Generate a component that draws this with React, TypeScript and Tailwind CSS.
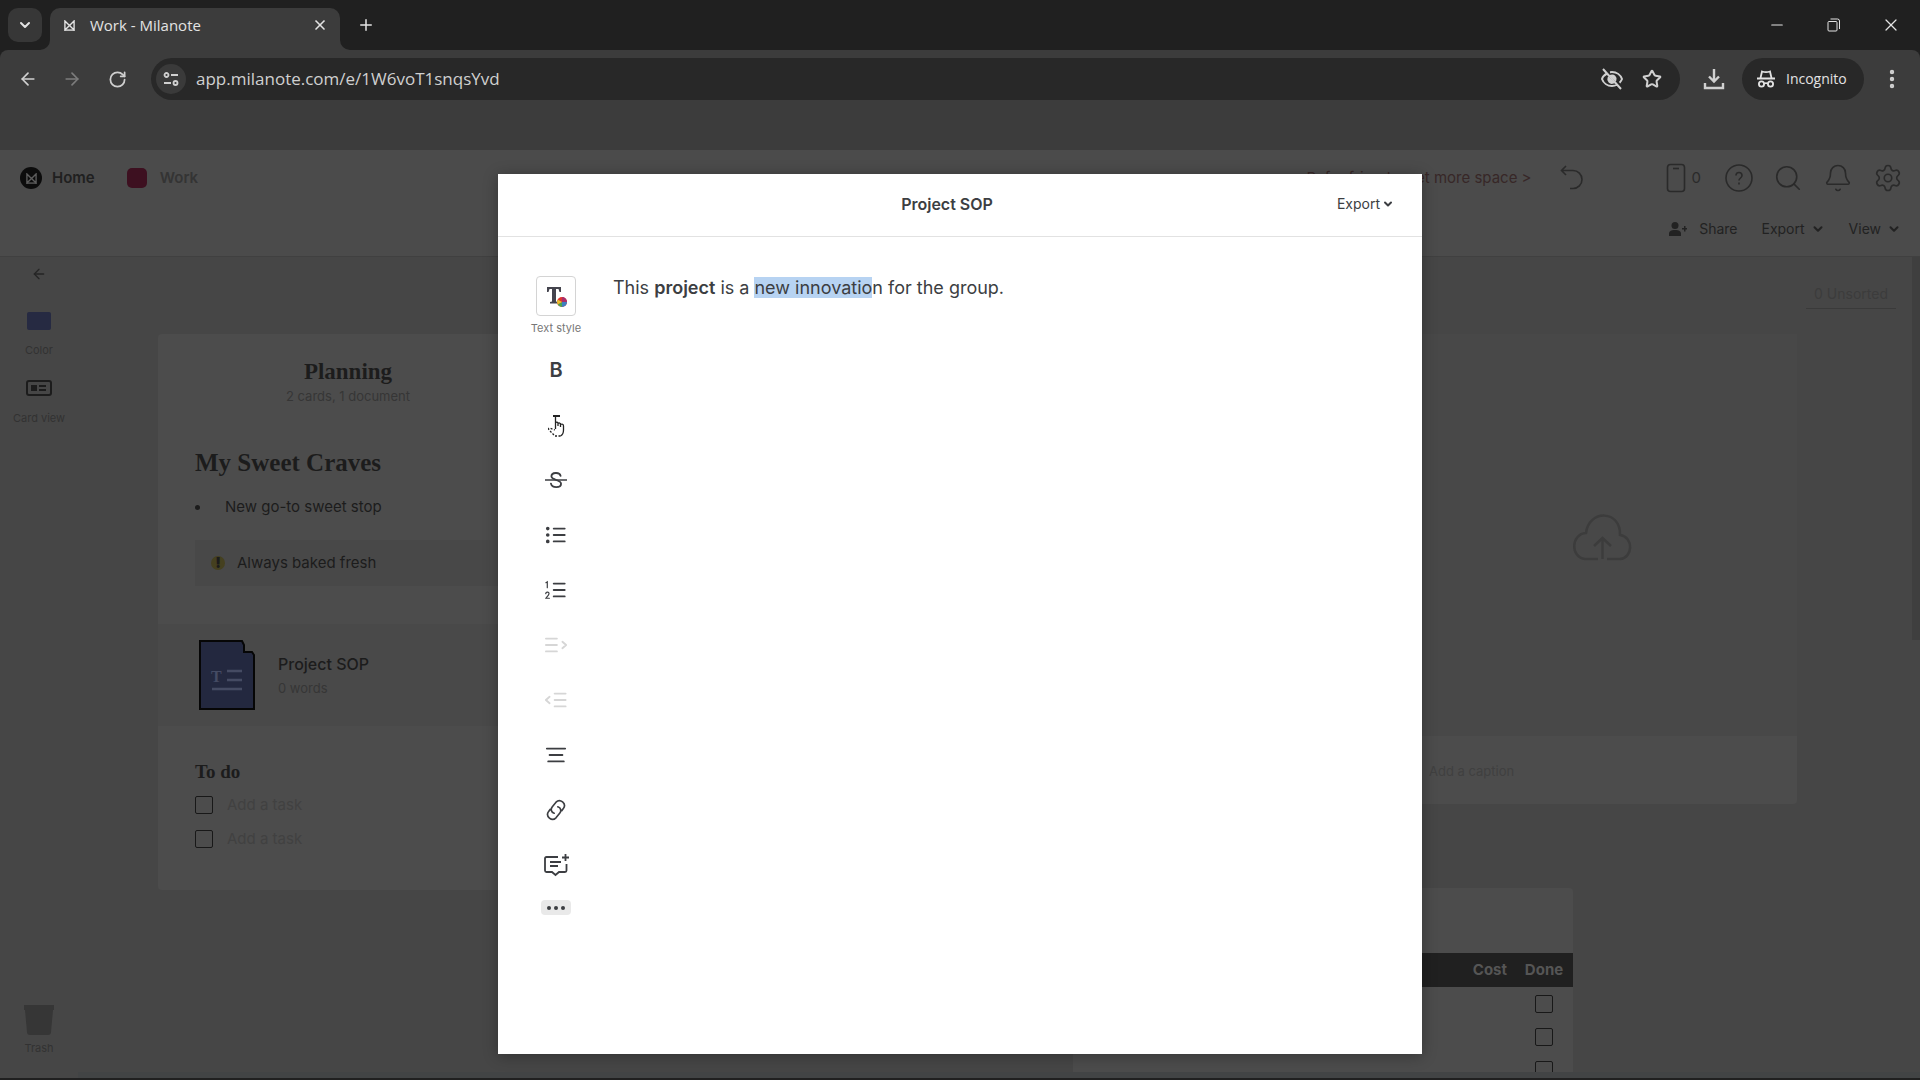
import React from "react";
import {
  ArrowLeft,
  ArrowRight,
  Bell,
  ChevronDown,
  EllipsisVertical,
  Minus,
  Plus,
  RotateCw,
  Search,
  Settings,
  Star,
  X,
} from "lucide-react";

const Logo: React.FC<{ className: string }> = ({ className }) => (
  <svg viewBox="0 0 12 12" className={className} fill="none" stroke="currentColor">
    <path d="M1 1l5 5 5-5v10L6 6l-5 5z" strokeWidth="1.5" />
    <path d="M1 11h10" strokeWidth="1.5" />
  </svg>
);

const BrowserTabs = () => (
  <div className="flex h-[50px] items-end bg-[#202020] text-[#e3e3e3]">
    <button
      aria-label="Search tabs"
      className="mb-2 ml-2 flex h-[34px] w-[34px] items-center justify-center rounded-[10px] bg-[#373737]"
    >
      <ChevronDown size={16} strokeWidth={3} />
    </button>
    <div className="relative ml-2 flex h-[42px] w-[290px] items-center rounded-t-[10px] bg-[#3c3c3c] pr-3 pl-[14px] pb-2">
      <svg viewBox="0 0 10 10" width="10" height="10" fill="#3c3c3c" className="absolute right-full bottom-0">
        <path d="M10 0v10H0A10 10 0 0 0 10 0z" />
      </svg>
      <svg viewBox="0 0 10 10" width="10" height="10" fill="#3c3c3c" className="absolute bottom-0 left-full">
        <path d="M0 0v10h10A10 10 0 0 1 0 0z" />
      </svg>
      <Logo className="h-[11px] w-[11px]" />
      <span className="ml-[15px] flex-1 text-[15px]">Work - Milanote</span>
      <button aria-label="Close tab">
        <X size={16} strokeWidth={2.5} />
      </button>
    </div>
    <button aria-label="New tab" className="mb-4 ml-[17px]">
      <Plus size={18} />
    </button>
    <div className="mr-[19px] mb-[15px] ml-auto flex w-[133px] items-center justify-between">
      <button aria-label="Minimize">
        <Minus size={18} strokeWidth={1.5} />
      </button>
      <button aria-label="Restore">
        <svg viewBox="0 0 14 14" width="14" height="14" fill="none" stroke="currentColor">
          <rect x="1" y="3.5" width="9" height="9.5" rx="1" />
          <path d="M3.5 1h7a2 2 0 0 1 2 2v8" />
        </svg>
      </button>
      <button aria-label="Close window">
        <X size={20} strokeWidth={1.5} />
      </button>
    </div>
  </div>
);

const AddressBar = () => (
  <div className="h-[100px] rounded-t-lg bg-[#3c3c3c] pt-2 text-[#d0d0d0]">
    <div className="flex h-[42px] items-center">
      <button aria-label="Back" className="ml-[18px]">
        <ArrowLeft size={20} />
      </button>
      <button aria-label="Forward" className="ml-6 text-[#7c7c7c]">
        <ArrowRight size={20} />
      </button>
      <button aria-label="Reload" className="ml-[26px]">
        <RotateCw size={19} strokeWidth={2.2} />
      </button>
      <div className="ml-6 flex h-[42px] flex-1 items-center rounded-full bg-[#282828] pr-[18px] pl-[5px]">
        <button
          aria-label="Site information"
          className="flex h-[30px] w-[30px] items-center justify-center rounded-full bg-[#3a3a3a]"
        >
          <svg viewBox="0 0 16 16" width="16" height="16" fill="none" stroke="currentColor" strokeWidth="1.8">
            <circle cx="3.5" cy="4" r="2" />
            <path d="M8 4h7M1 12h7" />
            <circle cx="12.5" cy="12" r="2" />
          </svg>
        </button>
        <input
          aria-label="Address"
          className="ml-[10px] min-w-0 flex-1 bg-transparent text-[17px] outline-none"
          defaultValue="app.milanote.com/e/1W6voT1snqsYvd"
        />
        <button aria-label="Third-party cookies blocked">
          <svg viewBox="0 0 24 24" width="24" height="24" fill="none" stroke="currentColor" strokeWidth="2">
            <path d="M7 6.500C4.500 7.800 2.600 10 2 12c1.400 4 5.400 7 10 7 1.800 0 3.500-.5 5-1.300M10 5.200c.7-.1 1.300-.2 2-.2 4.600 0 8.600 3 10 7-.5 1.300-1.300 2.600-2.400 3.700M3 2l18 20" />
            <path d="M11 8.600a3.500 3.500 0 0 1 4.400 4.400z" fill="currentColor" />
            <path d="M8.500 11a3.600 3.600 0 0 0 4.800 4.600z" fill="currentColor" />
          </svg>
        </button>
        <button aria-label="Bookmark this tab" className="ml-[18px]">
          <Star size={20} strokeWidth={2.4} />
        </button>
      </div>
      <button aria-label="Downloads" className="ml-[23px]">
        <svg viewBox="0 0 22 22" width="22" height="22" fill="none" stroke="currentColor" strokeWidth="2.4">
          <path d="M11 1v12M6 8.500l5 5 5-5M2 15v5h18v-5" />
        </svg>
      </button>
      <button className="ml-[17px] flex h-[42px] w-[122px] items-center gap-[10px] rounded-full bg-[#282828] pl-[14px] text-sm text-[#e3e3e3]">
        <svg viewBox="0 0 20 20" width="20" height="20" fill="none" stroke="currentColor" strokeWidth="1.8">
          <path d="M1 9.500h18M4.500 9l1.500-6.500c2 .7 6 .7 8 0L15.500 9" />
          <circle cx="5.500" cy="15" r="2.600" />
          <circle cx="14.500" cy="15" r="2.600" />
          <path d="M8 14.500c1.300-.6 2.700-.6 4 0" />
        </svg>
        Incognito
      </button>
      <button aria-label="Browser menu" className="mr-4 ml-4">
        <EllipsisVertical size={24} strokeWidth={2.4} />
      </button>
    </div>
  </div>
);

const AppHeader = () => (
  <header className="h-[107px] shrink-0 border-b border-[#404040] bg-[#4b4b4b] text-[#2a2a2a]">
    <div className="flex h-14 items-center pr-[17px] pl-5">
      <a href="#home" className="flex items-center gap-[10px] text-[15px] font-semibold text-[#202020]">
        <span className="flex h-[22px] w-[22px] items-center justify-center rounded-full bg-[#0c0c0c] text-[#5c5c5c]">
          <Logo className="h-[11px] w-[11px]" />
        </span>
        Home
      </a>
      <a href="#work" className="ml-8 flex items-center gap-[13px] text-[15px] font-semibold text-[#343434]">
        <span className="h-5 w-5 rounded-[5px] bg-[#3d1020]" />
        Work
      </a>
      <a href="#refer" className="ml-auto text-[15px] text-[#372727]">
        Refer friends, get more space &gt;
      </a>
      <button aria-label="Undo" className="ml-[28px]">
        <svg viewBox="0 0 24 26" width="24" height="26" fill="none" stroke="currentColor" strokeWidth="1.6">
          <path d="M6 1L1.500 5.500 6 10M1.500 5.500H13a9 9 0 0 1 0 18h-3" />
        </svg>
      </button>
      <button className="ml-[82px] flex items-center gap-[6px] text-[15px]">
        <svg viewBox="0 0 20 30" width="20" height="30" fill="none" stroke="currentColor" strokeWidth="1.6">
          <rect x="1.500" y="1.500" width="17" height="27" rx="3" />
          <path d="M7 5.500h6" />
        </svg>
        0
      </button>
      <button aria-label="Help" className="ml-6">
        <svg viewBox="0 0 28 28" width="28" height="28" fill="none" stroke="currentColor" strokeWidth="1.6">
          <circle cx="14" cy="14" r="13" />
          <path d="M11 11.500c0-4 6-4 6 0 0 2.500-3 2.500-3 5M14 18.500v2" />
        </svg>
      </button>
      <button aria-label="Search" className="ml-5">
        <Search size={30} strokeWidth={1.3} />
      </button>
      <button aria-label="Notifications" className="ml-5">
        <Bell size={30} strokeWidth={1.3} />
      </button>
      <button aria-label="Settings" className="ml-5">
        <Settings size={30} strokeWidth={1.3} />
      </button>
    </div>
    <div className="flex h-[46px] items-center justify-end pr-[19px] text-sm text-[#222222]">
      <button className="flex items-center gap-3">
        <svg viewBox="0 0 18 14" width="18" height="14" fill="currentColor">
          <circle cx="6" cy="3.500" r="3.500" />
          <path d="M0 14v-2c0-3 2-4 6-4s6 1 6 4v2zM13 6h2V4h1.500v2H18v1.500h-1.500v2H15v-2h-2z" />
        </svg>
        Share
      </button>
      <button className="ml-6 flex items-center gap-[6px]">
        Export <ChevronDown size={14} strokeWidth={3.5} />
      </button>
      <button className="ml-6 flex items-center gap-[6px]">
        View <ChevronDown size={14} strokeWidth={3.5} />
      </button>
    </div>
  </header>
);

const Sidebar = () => (
  <aside className="flex w-[78px] shrink-0 flex-col items-center pt-[9px] text-[11px] leading-4 text-[#323232]">
    <button aria-label="Back">
      <ArrowLeft size={16} className="text-[#252525]" />
    </button>
    <button className="mt-[30px] flex flex-col items-center gap-3">
      <span className="h-[18px] w-[24px] rounded-[2px] bg-[#262a42]" />
      Color
    </button>
    <button className="mt-[22px] flex flex-col items-center gap-[14px]">
      <svg viewBox="0 0 26 16" width="26" height="16" className="text-[#1c1c1c]">
        <rect x="1" y="1" width="24" height="14" rx="2" fill="none" stroke="currentColor" strokeWidth="2" />
        <path d="M5 5h6v6H5zM13 5h7v2h-7zM13 9h7v2h-7z" fill="currentColor" />
      </svg>
      Card view
    </button>
    <button className="mt-auto mb-[22px] flex flex-col items-center gap-1">
      <svg viewBox="0 0 30 32" width="30" height="32" fill="#363636">
        <path d="M0 1h30v5h-1l-2 22q0 3-3 3H6q-3 0-3-3L1 6H0z" />
      </svg>
      Trash
    </button>
  </aside>
);

const PlanningCard = () => (
  <section className="absolute top-[77px] left-[80px] w-[380px] rounded bg-[#4c4c4c] pb-[34px] text-[#1c1c1c]">
    <div className="flex flex-col items-center pt-6">
      <h2 className="font-[Liberation_Serif,serif] text-[23px] leading-7 font-bold">Planning</h2>
      <p className="text-[13px] leading-5 text-[#363636]">2 cards, 1 document</p>
    </div>
    <div className="px-[37px] pt-[39px]">
      <h1 className="font-[Liberation_Serif,serif] text-[25px] leading-9 font-bold">My Sweet Craves</h1>
      <ul className="mt-[14px] text-[15px] leading-6">
        <li className="flex items-center gap-[25px]">
          <span className="h-[5px] w-[5px] rounded-full bg-current" />
          New go-to sweet stop
        </li>
      </ul>
      <p className="mt-[21px] flex h-[46px] items-center gap-3 bg-[#484848] pl-4 text-[15px]">
        <span className="h-[14px] w-[14px] rounded-full bg-[#45401f] text-center text-[15px] leading-[14px] font-black">!</span>
        Always baked fresh
      </p>
    </div>
    <div className="mt-[38px] flex h-[102px] items-center gap-[23px] bg-[#494949] pl-[41px]">
      <svg viewBox="0 0 56 70" width="56" height="70">
        <path d="M1 1h42l2 4v7h8l2 3v54H1z" fill="#23283f" stroke="#060606" strokeWidth="2" />
        <path d="M28 31h15M28 40h15M13 49h30" stroke="#454b63" strokeWidth="2.500" />
        <text x="12" y="42" fill="#454b63" fontSize="16" fontWeight="bold" fontFamily="Liberation Serif">T</text>
      </svg>
      <div className="pt-0.5">
        <h3 className="text-base leading-6 font-medium">Project SOP</h3>
        <p className="text-[13px] leading-6 text-[#363636]">0 words</p>
      </div>
    </div>
    <div className="px-[37px] pt-8">
      <h3 className="mb-0.5 font-[Liberation_Serif,serif] text-[19px] leading-7 font-bold">To do</h3>
      {["task-1", "task-2"].map((id) => (
        <label key={id} className="flex h-[34px] items-center gap-[14px] text-[15px] text-[#414141]">
          <input type="checkbox" className="h-[18px] w-[18px] appearance-none rounded-[2px] border border-[#181818]" />
          Add a task
        </label>
      ))}
    </div>
  </section>
);

const UploadCard = () => (
  <section className="absolute top-[77px] right-[123px] w-[520px] rounded bg-[#4c4c4c]">
    <div className="flex h-[402px] items-center justify-center bg-[#484848] pt-1 pl-[130px]">
      <svg viewBox="0 0 60 48" width="60" height="48" fill="none" stroke="#3c3c3c" strokeWidth="2.500">
        <path d="M26 46H13C-2 44-1 21 14 20 17-4 49-3 48 22c14 2 13 23 0 24H35M30.500 46V26M22 33l8.500-8 8.500 8" />
      </svg>
    </div>
    <p className="h-[68px] pt-[26px] pl-[152px] text-[13px] text-[#404040]">Add a caption</p>
  </section>
);

const CostTable = () => (
  <section className="absolute top-[631px] right-[347px] bottom-1.5 w-[500px] overflow-hidden rounded-t bg-[#4c4c4c] pt-[65px]">
    <table className="w-full text-[15px] text-[#555555]">
      <thead className="h-[34px] bg-[#202020]">
        <tr>
          <th className="pr-2 text-right">Cost</th>
          <th className="w-[58px] text-center">Done</th>
        </tr>
      </thead>
      <tbody>
        {[1, 2, 3].map((row) => (
          <tr key={row} className="h-[33px]">
            <td />
            <td className="text-center">
              <input
                type="checkbox"
                aria-label={`Row ${row} done`}
                className="h-[18px] w-[18px] appearance-none rounded-[2px] border border-[#181818] align-middle"
              />
            </td>
          </tr>
        ))}
      </tbody>
    </table>
  </section>
);

const tools: { label: string; muted?: boolean; icon: React.ReactNode }[] = [
  {
    label: "Strikethrough",
    icon: (
      <>
        <path d="M0 12h24" strokeWidth="1.500" />
        <path d="M17 7.500C16 3 7 3.500 7 8c0 4.500 10.500 3.500 10.500 8 0 5-10 5-11 0" />
      </>
    ),
  },
  {
    label: "Bulleted list",
    icon: (
      <>
        <path d="M9.500 5h12M9.500 12h12M9.500 19h12" />
        <path d="M3 5v0M3 12v0M3 19v0" strokeWidth="4" />
      </>
    ),
  },
  {
    label: "Numbered list",
    icon: (
      <>
        <path d="M9.500 5h12M9.500 12h12M9.500 19h12" />
        <path d="M1 4l1.500-1v6.500M.8 16c.3-2.500 4-2 3.500.3-.3 1.500-2 2.700-3.300 4.700h3.800" strokeWidth="1.300" />
      </>
    ),
  },
  { label: "Indent", muted: true, icon: <path d="M1 5h12M1 12h12M1 19h12M19 8.500l4 3.500-4 3.500" /> },
  { label: "Outdent", muted: true, icon: <path d="M10.500 5h12M10.500 12h12M10.500 19h12M5 8.500L1 12l4 3.500" /> },
  { label: "Align", icon: <path d="M2 5h20M5 12h14M3.500 19h17" /> },
  {
    label: "Link",
    icon: (
      <path
        d="M10 15.500c-3.500-1-4-4.500-2-7l4-5c4.500-4.500 12 1.500 8 7l-1.700 2.200M14 8.500c3.500 1 4 4.500 2 7l-4 5c-4.500 4.500-12-1.500-8-7l1.700-2.200"
        strokeWidth="1.800"
      />
    ),
  },
];

const Toolbar = () => (
  <div className="flex w-[58px] flex-col items-center text-[#3c3e42]">
    <button className="flex flex-col items-center gap-1 text-[11px] leading-4 text-[#777777]">
      <span className="flex h-10 w-10 items-center justify-center rounded border border-[#d4d4d4]">
        <svg viewBox="0 0 24 24" width="24" height="24">
          <path d="M3 3h14v5h-1.500L14.500 5H12v12.500l2 .5v1.500H6V18l2-.5V5H5.500L4.500 8H3z" fill="#44444e" />
          <circle cx="18" cy="18" r="5" fill="#e0352f" />
          <path d="M18 18v-5a5 5 0 0 1 5 5z" fill="#a8306c" />
          <path d="M18 18h5a5 5 0 0 1-5 5z" fill="#3e7fc0" />
          <path d="M18 18v5a5 5 0 0 1-4.300-2.500z" fill="#4ba64f" />
          <path d="M18 18l-4.300 2.500a5 5 0 0 1 0-5z" fill="#e8c22e" />
        </svg>
      </span>
      Text style
    </button>
    <button aria-label="Bold" className="mt-1.5 flex h-[55px] items-center text-xl font-semibold">
      B
    </button>
    <button aria-label="Italic" className="flex h-[55px] items-center">
      <svg viewBox="0 0 18 24" width="18" height="24" fill="none" stroke="#222222" strokeWidth="1.300">
        <path d="M6 3h7" strokeWidth="2" />
        <path d="M8.500 4v12M8.500 10c1-1.500 2.500-1 2.500.5V13M11 10.500c1-1 2.500-.5 2.500 1V14M13.500 11.500c1.500-.8 3-.3 3 1.500v4c0 3-1 5-3 6" />
        <path d="M13.500 23H8L2 17c-1-1.500 0-2.500 1.500-1.700L8 17" strokeDasharray="2 1.500" />
      </svg>
    </button>
    {tools.map((tool) => (
      <button
        key={tool.label}
        aria-label={tool.label}
        className={tool.muted ? "flex h-[55px] items-center text-[#d6d6d6]" : "flex h-[55px] items-center"}
      >
        <svg viewBox="0 0 24 24" width="22" height="22" fill="none" stroke="currentColor" strokeWidth="2" strokeLinecap="round">
          {tool.icon}
        </svg>
      </button>
    ))}
    <button aria-label="Comment" className="flex h-[55px] items-center">
      <svg viewBox="0 0 26 24" width="26" height="24" fill="none" stroke="currentColor" strokeWidth="1.800">
        <path d="M15 4H3.500Q2 4 2 5.500v12Q2 19 3.500 19H9l3.500 3L16 19h6q1.500 0 1.500-1.500V11M7 9h11M7 13h8M22.500 1v7M19 4.500h7" />
      </svg>
    </button>
    <button aria-label="More" className="mt-2 flex h-[15px] w-[30px] items-center justify-center gap-[3px] rounded bg-[#e9e9e9]">
      <span className="h-1 w-1 rounded-full bg-current" />
      <span className="h-1 w-1 rounded-full bg-current" />
      <span className="h-1 w-1 rounded-full bg-current" />
    </button>
  </div>
);

const DocumentModal = () => (
  <div className="absolute inset-0 flex justify-center py-6">
    <div role="dialog" aria-label="Project SOP" className="flex w-[924px] flex-col bg-white text-[#3c3e42] shadow-[0_2px_14px_rgba(0,0,0,0.3)]">
      <div className="grid h-[63px] shrink-0 grid-cols-3 items-center border-b border-[#e2e2e2] pr-7 pb-0.5 pl-0.5">
        <h2 className="col-start-2 text-center text-base font-semibold">Project SOP</h2>
        <button className="flex items-center gap-0.5 justify-self-end text-sm">
          Export <ChevronDown size={12} strokeWidth={4} />
        </button>
      </div>
      <div className="flex flex-1 pt-[39px] pl-[29px]">
        <Toolbar />
        <p className="ml-7 text-lg leading-6">
          This <strong className="font-semibold">project</strong> is a <span className="bg-[#b7d3f2]">new innovatio</span>n for the group.
        </p>
      </div>
    </div>
  </div>
);

const App: React.FC = () => {
  return (
    <div className="flex h-screen flex-col overflow-hidden bg-[#464646] font-[Inter,sans-serif]">
      <div className="shrink-0 bg-[#202020] font-[Open_Sans,sans-serif]">
        <BrowserTabs />
        <AddressBar />
      </div>
      <div className="relative flex min-h-0 flex-1 flex-col border-b-2 border-[#202020]">
        <AppHeader />
        <main className="flex min-h-0 flex-1">
          <Sidebar />
          <div className="relative flex-1 overflow-hidden">
            <PlanningCard />
            <UploadCard />
            <CostTable />
            <button className="absolute top-[26px] right-6 border-b border-[#3a3a3a] px-2 pb-1 text-[14px] text-[#3c3c3c]">
              0 Unsorted
            </button>
            <div className="absolute top-0 right-0 h-[383px] w-2 bg-[#3f3f3f]" />
            <div className="absolute right-0 bottom-0 left-0 h-1.5 bg-[#424445]" />
          </div>
        </main>
        <DocumentModal />
      </div>
    </div>
  );
};

export default App;
